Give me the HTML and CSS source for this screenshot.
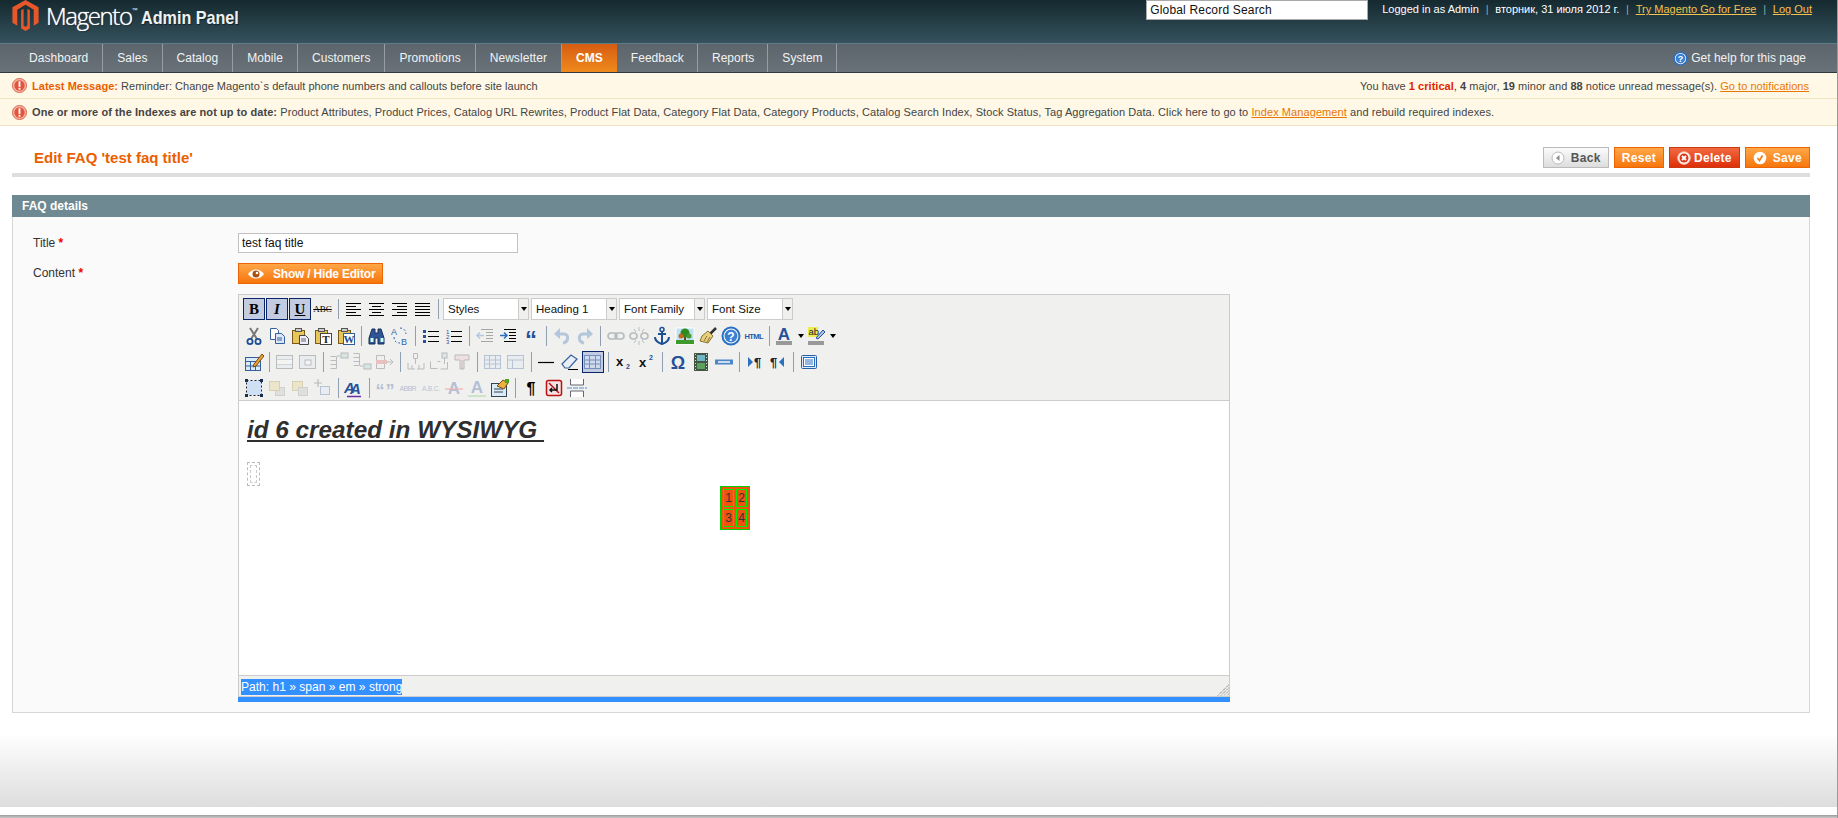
FILE: index.html
```html
<!DOCTYPE html>
<html lang="en">
<head>
<meta charset="utf-8">
<title>Edit FAQ</title>
<link rel="stylesheet" href="styles.css">
</head>
<body>
<svg class="defs" width="0" height="0" aria-hidden="true">
  <symbol id="al" viewBox="0 0 20 20"><path class="ln" d="M2 4.500h15M2 7.500h10M2 10.500h15M2 13.500h10M2 16.500h15"/></symbol>
  <symbol id="ac" viewBox="0 0 20 20"><path class="ln" d="M2 4.500h15M5 7.500h9M2 10.500h15M5 13.500h9M2 16.500h15"/></symbol>
  <symbol id="ar" viewBox="0 0 20 20"><path class="ln" d="M2 4.500h15M7 7.500h10M2 10.500h15M7 13.500h10M2 16.500h15"/></symbol>
  <symbol id="aj" viewBox="0 0 20 20"><path class="ln" d="M2 4.500h15M2 7.500h15M2 10.500h15M2 13.500h15M2 16.500h15"/></symbol>
  <symbol id="cut" viewBox="0 0 20 20"><path d="M6 2l7 11M14 2L7 13" stroke="#777" stroke-width="2" fill="none"/><circle cx="6" cy="15.500" r="2.600" fill="none" stroke="#1d4f93" stroke-width="1.800"/><circle cx="14" cy="15.500" r="2.600" fill="none" stroke="#1d4f93" stroke-width="1.800"/></symbol>
  <symbol id="copy" viewBox="0 0 20 20"><path d="M3.500 2.500h6l2 2v9h-8z" fill="#fff" stroke="#345f9c"/><path d="M8.500 7.500h6l3 3v7h-9z" fill="#dbe7f6" stroke="#345f9c"/><path d="M10 12h5M10 14h5" stroke="#345f9c"/></symbol>
  <symbol id="paste" viewBox="0 0 20 20"><rect x="2.500" y="4.500" width="12" height="13" fill="#e9c65a" stroke="#7a5a18"/><rect x="5.500" y="2.500" width="6" height="3" fill="#ccc" stroke="#555"/><path d="M9.500 9.500h6l3 3v6h-9z" fill="#eef" stroke="#444"/><path d="M11 13h5M11 15h5" stroke="#666"/></symbol>
  <symbol id="pastet" viewBox="0 0 20 20"><rect x="2.500" y="4.500" width="12" height="13" fill="#e9c65a" stroke="#7a5a18"/><rect x="5.500" y="2.500" width="6" height="3" fill="#ccc" stroke="#555"/><rect x="7.500" y="7.500" width="11" height="11" fill="#fff" stroke="#444"/><text class="ser" x="13" y="17" text-anchor="middle" font-size="11" fill="#222">T</text></symbol>
  <symbol id="pastew" viewBox="0 0 20 20"><rect x="2.500" y="4.500" width="12" height="13" fill="#e9c65a" stroke="#7a5a18"/><rect x="5.500" y="2.500" width="6" height="3" fill="#ccc" stroke="#555"/><rect x="7.500" y="7.500" width="11" height="11" fill="#fff" stroke="#345f9c"/><text class="ser" x="13" y="17" text-anchor="middle" font-size="11" fill="#1d4f93">W</text></symbol>
  <symbol id="find" viewBox="0 0 20 20"><path d="M5 3h3v4h3V3h3l3 9v6h-6v-6H8v6H2v-6z" fill="#2d5597" stroke="#1b2f55"/><rect x="3.500" y="12" width="3" height="4" fill="#cfe"/><rect x="13.500" y="12" width="3" height="4" fill="#cfe"/></symbol>
  <symbol id="repl" viewBox="0 0 20 20"><text class="san" x="1" y="9" font-size="9" fill="#2d67b2">A</text><text class="san" x="11" y="19" font-size="9" fill="#2d67b2">B</text><path d="M4 11c0 4 2 6 6 6M10 2c3 0 6 2 6 6" fill="none" stroke="#2d67b2" stroke-dasharray="2 2"/></symbol>
  <symbol id="ul" viewBox="0 0 20 20"><rect x="2" y="4" width="3" height="3" fill="#27509a"/><rect x="2" y="9" width="3" height="3" fill="#27509a"/><rect x="2" y="14" width="3" height="3" fill="#27509a"/><path class="ln" d="M7 5.500h11M7 10.500h11M7 15.500h11"/></symbol>
  <symbol id="ol" viewBox="0 0 20 20"><text class="san" x="2" y="8" font-size="6" fill="#27509a">1</text><text class="san" x="2" y="13" font-size="6" fill="#27509a">2</text><text class="san" x="2" y="18" font-size="6" fill="#27509a">3</text><path class="ln" d="M7 5.500h11M7 10.500h11M7 15.500h11"/></symbol>
  <symbol id="out" viewBox="0 0 20 20"><path class="ln" d="M6 3.500h12M11 6.500h7M11 9.500h7M11 12.500h7M6 15.500h12"/><path d="M9 9.500H2M5 6.500l-3 3 3 3" fill="none" stroke="#2a6fc0" stroke-width="1.500"/></symbol>
  <symbol id="ind" viewBox="0 0 20 20"><path class="ln" d="M6 3.500h12M11 6.500h7M11 9.500h7M11 12.500h7M6 15.500h12"/><path d="M2 9.500h7M6 6.500l3 3-3 3" fill="none" stroke="#2a6fc0" stroke-width="1.500"/></symbol>
  <symbol id="quo" viewBox="0 0 20 20"><text class="sb" x="10" y="22" text-anchor="middle" font-size="24" fill="#27509a">“</text></symbol>
  <symbol id="undo" viewBox="0 0 20 20"><path d="M5 8h7c5 0 5 8-1 9" fill="none" stroke="#2d67b2" stroke-width="3"/><path d="M8 2v11L2 8z" fill="#2d67b2"/></symbol>
  <symbol id="redo" viewBox="0 0 20 20"><path d="M15 8H8c-5 0-5 8 1 9" fill="none" stroke="#2d67b2" stroke-width="3"/><path d="M12 2v11l6-5z" fill="#2d67b2"/></symbol>
  <symbol id="lnk" viewBox="0 0 20 20"><rect x="2" y="7" width="9" height="6" rx="3" fill="none" stroke="#345" stroke-width="1.600"/><rect x="9" y="7" width="9" height="6" rx="3" fill="none" stroke="#345" stroke-width="1.600"/></symbol>
  <symbol id="unl" viewBox="0 0 20 20"><rect x="1" y="7" width="7" height="6" rx="3" fill="none" stroke="#345" stroke-width="1.600"/><rect x="12" y="7" width="7" height="6" rx="3" fill="none" stroke="#345" stroke-width="1.600"/><path d="M10 1v4M10 15v4M5 3l2 3M15 3l-2 3M5 17l2-3M15 17l-2-3" stroke="#345"/></symbol>
  <symbol id="anc" viewBox="0 0 20 20"><circle cx="10" cy="3.500" r="2" fill="none" stroke="#1d4f93" stroke-width="1.500"/><path d="M10 5v13M6 8h8M3 11c0 4 4 6 7 7 3-1 7-3 7-7" fill="none" stroke="#1d4f93" stroke-width="2"/></symbol>
  <symbol id="img" viewBox="0 0 20 20"><rect x="1" y="2" width="18" height="16" fill="#bfe0f5" stroke="#fff"/><rect x="1" y="14" width="18" height="4" fill="#3f9a2d"/><path d="M10 14v-5" stroke="#6b3f12" stroke-width="2"/><circle cx="10" cy="7" r="4.500" fill="#2f8a20"/><circle cx="6" cy="10" r="2.500" fill="#c06a20"/><circle cx="14" cy="10" r="2.500" fill="#4a9a2d"/></symbol>
  <symbol id="cln" viewBox="0 0 20 20"><path d="M12 8l6-6" stroke="#333" stroke-width="2.500"/><path d="M10 5l5 5-5 7-8-2 2-5z" fill="#e7cf7d" stroke="#8a7330"/><path d="M6 15l3-5M9 16l3-5" stroke="#8a7330"/></symbol>
  <symbol id="hlp" viewBox="0 0 20 20"><circle cx="10" cy="10" r="8.500" fill="#fff" stroke="#2a6fc0" stroke-width="2"/><circle cx="10" cy="10" r="6.500" fill="#3b7fd3"/><text class="sb" x="10" y="14.500" text-anchor="middle" font-size="12" fill="#fff">?</text></symbol>
  <symbol id="htm" viewBox="0 0 20 20"><text class="sb" x="10" y="13" text-anchor="middle" font-size="7.500" fill="#1f5aa8" textLength="19">HTML</text></symbol>
  <symbol id="fc" viewBox="0 0 20 20"><text class="sb" x="9" y="14" text-anchor="middle" font-size="17" fill="#27509a">A</text><rect x="1" y="15" width="16" height="4" fill="#999"/></symbol>
  <symbol id="bc" viewBox="0 0 20 20"><rect x="1" y="1" width="10" height="10" fill="#ecec54"/><text class="san" x="1.500" y="9" font-size="9.500" fill="#222">ab</text><path d="M9 12l7-8 2 2-7 7z" fill="#a9c4e6" stroke="#27509a"/><rect x="1" y="15" width="16" height="4" fill="#999"/></symbol>
  <symbol id="edt" viewBox="0 0 20 20"><rect x="1.500" y="5.500" width="15" height="13" fill="#dce9f7" stroke="#345f9c"/><path d="M1.500 9.500h15M6.500 9.500v9M11.500 9.500v9M1.500 14h15" stroke="#345f9c"/><path d="M10 12l8-10 2 2-8 10-3 1z" fill="#e8a22f" stroke="#7c4a12"/></symbol>
  <symbol id="tbr" viewBox="0 0 20 20"><rect x="1.500" y="3.500" width="16" height="13" fill="#dbe7f6" stroke="#445"/><path d="M1.500 8h16M1.500 12h16" stroke="#445"/><rect x="2" y="8" width="15" height="4" fill="#fff"/></symbol>
  <symbol id="tbc" viewBox="0 0 20 20"><rect x="1.500" y="3.500" width="16" height="13" fill="#dbe7f6" stroke="#445"/><rect x="7" y="8" width="6" height="5" fill="#fff" stroke="#445"/></symbol>
  <symbol id="insb" viewBox="0 0 20 20"><path d="M1.500 4.500h6v12h-6M1.500 8.500h6M1.500 12.500h6" fill="none" stroke="#445"/><rect x="12" y="1" width="7" height="5" fill="#9cc" stroke="#445"/><path d="M11 4H8" stroke="#345"/></symbol>
  <symbol id="insa" viewBox="0 0 20 20"><path d="M1.500 1.500h6v12h-6M1.500 5.500h6M1.500 9.500h6" fill="none" stroke="#445"/><rect x="12" y="12" width="7" height="5" fill="#9cc" stroke="#445"/><path d="M11 14H8" stroke="#345"/></symbol>
  <symbol id="delr" viewBox="0 0 20 20"><path d="M1.500 3.500h8M1.500 16.500h8M1.500 3.500v13M9.500 3.500v13" fill="none" stroke="#445"/><rect x="1" y="8" width="11" height="4" fill="#d55"/><path d="M11 10h7M15 7l3 3-3 3" fill="none" stroke="#445"/></symbol>
  <symbol id="cb" viewBox="0 0 20 20"><path d="M7.500 1.500h4v5h-4zM9.500 7v5M2 11l0 6h7M11 17h7v-6M6 13v4M13 13v4" fill="none" stroke="#445"/></symbol>
  <symbol id="cd" viewBox="0 0 20 20"><path d="M1.500 9.500v7h7M8.500 9.500h3M11.500 17h7v-7" fill="none" stroke="#445"/><rect x="13" y="1" width="5" height="5" fill="#bcd" stroke="#445"/><path d="M15.500 6v6" stroke="#445"/></symbol>
  <symbol id="cx" viewBox="0 0 20 20"><path d="M3 3h14v5h-5v9H8V8H3z" fill="#eebbbb" stroke="#445"/><path d="M10 8v9" stroke="#445"/></symbol>
  <symbol id="tbl" viewBox="0 0 20 20"><rect x="1.500" y="3.500" width="16" height="13" fill="#dbe7f6" stroke="#345f9c"/><path d="M1.500 8h16M1.500 12h16M6.500 3.500v13M12.500 3.500v13" stroke="#345f9c"/></symbol>
  <symbol id="tb2" viewBox="0 0 20 20"><rect x="1.500" y="3.500" width="16" height="13" fill="#dbe7f6" stroke="#345f9c"/><path d="M1.500 8h16M6.500 8v8.500" stroke="#345f9c"/></symbol>
  <symbol id="hr" viewBox="0 0 20 20"><path d="M1 10.500h16" stroke="#000" stroke-width="1.200"/></symbol>
  <symbol id="era" viewBox="0 0 20 20"><path d="M2 12L11 3l6 4-8 9H5z" fill="#e8eef6" stroke="#345f9c" stroke-width="1.200"/><path d="M8 17.500h10" stroke="#000"/></symbol>
  <symbol id="sub" viewBox="0 0 20 20"><text class="sb" x="2" y="14" font-size="13" fill="#111">x</text><text class="sb" x="12" y="17" font-size="7" fill="#27509a">2</text></symbol>
  <symbol id="sup" viewBox="0 0 20 20"><text class="sb" x="2" y="15" font-size="13" fill="#111">x</text><text class="sb" x="12" y="8" font-size="7" fill="#27509a">2</text></symbol>
  <symbol id="om" viewBox="0 0 20 20"><text class="sb" x="10" y="17" text-anchor="middle" font-size="18" fill="#27509a">Ω</text></symbol>
  <symbol id="med" viewBox="0 0 20 20"><rect x="3" y="1" width="14" height="18" fill="#454"/><rect x="6" y="3" width="8" height="6" fill="#6db6c8"/><rect x="6" y="11" width="8" height="6" fill="#5da25a"/><path d="M4.500 2v16M15.500 2v16" stroke="#cdd" stroke-dasharray="1 2"/></symbol>
  <symbol id="nbs" viewBox="0 0 20 20"><rect x="1" y="7.500" width="18" height="5" fill="#4d86c9"/><rect x="4" y="9" width="12" height="2" fill="#cde"/></symbol>
  <symbol id="ltr" viewBox="0 0 20 20"><path d="M3 5l5 5-5 5z" fill="#2a6fc0"/><text class="sb" x="9" y="15" font-size="13" fill="#223">¶</text></symbol>
  <symbol id="rtl" viewBox="0 0 20 20"><text class="sb" x="2" y="15" font-size="13" fill="#223">¶</text><path d="M16 5l-5 5 5 5z" fill="#2a6fc0"/></symbol>
  <symbol id="ful" viewBox="0 0 20 20"><rect x="2.500" y="3.500" width="15" height="13" rx="1" fill="#dce9f7" stroke="#2a5fa5"/><rect x="4.500" y="5.500" width="11" height="9" fill="#fff" stroke="#2a6fc0"/><path d="M6 8h8M6 10h8M6 12h8" stroke="#2a6fc0"/></symbol>
  <symbol id="sela" viewBox="0 0 20 20"><rect x="3" y="3" width="14" height="14" fill="#cfe0f5"/><path d="M2.500 2.500h15v15h-15z" fill="none" stroke="#223" stroke-dasharray="2 2"/><path d="M1 1h3v3H1zM16 1h3v3h-3zM1 16h3v3H1zM16 16h3v3h-3z" fill="#1b2f55"/></symbol>
  <symbol id="lf" viewBox="0 0 20 20"><rect x="8.500" y="9.500" width="9" height="8" fill="#bbb" stroke="#888"/><rect x="2.500" y="3.500" width="10" height="9" fill="#e8cf7a" stroke="#a48a36"/></symbol>
  <symbol id="lb" viewBox="0 0 20 20"><rect x="2.500" y="3.500" width="10" height="9" fill="#e8cf7a" stroke="#a48a36"/><rect x="8.500" y="9.500" width="9" height="8" fill="#bbb" stroke="#888"/></symbol>
  <symbol id="la" viewBox="0 0 20 20"><rect x="7.500" y="8.500" width="9" height="8" fill="#dbe7f6" stroke="#345f9c"/><path d="M5 1v8M1 5h8" stroke="#445" stroke-width="1.200"/></symbol>
  <symbol id="sty" viewBox="0 0 20 20"><text class="sbi" x="0" y="15" font-size="15" fill="#27509a">A</text><text class="sbi" x="6" y="16" font-size="15" fill="#27509a">A</text><path d="M3 18.500h14" stroke="#6b2fa5" stroke-width="1.500"/></symbol>
  <symbol id="cit" viewBox="0 0 20 20"><text class="sb" x="10" y="19" text-anchor="middle" font-size="18" fill="#27509a" textLength="19">“”</text></symbol>
  <symbol id="abb" viewBox="0 0 20 20"><text class="san" x="10" y="13" text-anchor="middle" font-size="7" fill="#27509a" textLength="17">ABBR</text></symbol>
  <symbol id="acr" viewBox="0 0 20 20"><text class="san" x="10" y="13" text-anchor="middle" font-size="6.500" fill="#27509a" textLength="18">A.B.C.</text></symbol>
  <symbol id="del" viewBox="0 0 20 20"><text class="sb" x="10" y="16" text-anchor="middle" font-size="17" fill="#27509a">A</text><path d="M1 11h18" stroke="#e22" stroke-width="1.200"/></symbol>
  <symbol id="ins" viewBox="0 0 20 20"><text class="sb" x="10" y="15" text-anchor="middle" font-size="17" fill="#27509a">A</text><path d="M1 18h18" stroke="#3a3" stroke-width="1.200"/></symbol>
  <symbol id="att" viewBox="0 0 20 20"><rect x="1.500" y="5.500" width="15" height="13" fill="#dce9f7" stroke="#345"/><path d="M4 11h9M4 14h9" stroke="#345"/><path d="M7 8l6-6 5 3-4 6z" fill="#e8b23f" stroke="#7c4a12"/><rect x="15" y="1" width="4" height="4" fill="#4a2"/></symbol>
  <symbol id="pil" viewBox="0 0 20 20"><text class="sb" x="10" y="16" text-anchor="middle" font-size="16" fill="#000">¶</text></symbol>
  <symbol id="vch" viewBox="0 0 20 20"><rect x="2.500" y="2.500" width="15" height="15" rx="2" fill="#f7e3e3" stroke="#b11" stroke-width="1.500"/><path d="M5 5l10 10" stroke="#b11" stroke-width="1.500"/><path d="M13 6v6H6M8 10l-2 2 2 2" fill="none" stroke="#111" stroke-width="1.500"/></symbol>
  <symbol id="pgb" viewBox="0 0 20 20"><path d="M3.500 1v6h13V1M3.500 19v-6h13v6" fill="#fff" stroke="#667"/><path d="M0 10h20" stroke="#5b8fd0" stroke-dasharray="5 1"/></symbol>
</svg>

<div class="page">
<header class="head">
  <div class="logo">
    <svg class="mark" viewBox="0 0 27 32"><path fill="#e8572a" d="M13.500 0L27 7.500v16L22 26.500V10L13.500 5 5 10v16.500L0 23.500v-16z"/><path fill="#e8572a" d="M13.500 32L9 29.300V10.500l2.500-1.500v17.500l2 1.200 2-1.200V9l2.500 1.500v18.800z"/></svg>
    <span class="brand">Magento</span><span class="tm">™</span><span class="panel">Admin Panel</span>
  </div>
  <div class="top-right">
    <input class="global" type="text" value="Global Record Search">
    <div class="userline">Logged in as Admin<i>|</i>вторник, 31 июля 2012 г.<i>|</i><a href="#">Try Magento Go for Free</a><i>|</i><a href="#">Log Out</a></div>
  </div>
</header>
<nav class="nav">
  <ul class="tabs">
    <li>Dashboard</li><li>Sales</li><li>Catalog</li><li>Mobile</li><li>Customers</li><li>Promotions</li><li>Newsletter</li><li class="on">CMS</li><li>Feedback</li><li>Reports</li><li>System</li>
  </ul>
  <a class="help" href="#"><svg class="help-i" viewBox="0 0 20 20"><use href="#hlp"/></svg>Get help for this page</a>
</nav>
<div class="notice">
  <svg class="warn" viewBox="0 0 16 16"><circle cx="8" cy="8" r="7.500" fill="#f6b7a8" stroke="#d9604a"/><circle cx="8" cy="8" r="5.500" fill="#e2553c"/><rect x="7" y="3.500" width="2" height="6" fill="#fff"/><rect x="7" y="10.500" width="2" height="2" fill="#fff"/></svg>
  <p class="ntext"><b class="latest">Latest Message:</b> Reminder: Change Magento`s default phone numbers and callouts before site launch</p>
  <p class="nright">You have <b class="crit">1 critical</b>, <b>4</b> major, <b>19</b> minor and <b>88</b> notice unread message(s). <a href="#">Go to notifications</a></p>
</div>
<div class="notice">
  <svg class="warn" viewBox="0 0 16 16"><circle cx="8" cy="8" r="7.500" fill="#f6b7a8" stroke="#d9604a"/><circle cx="8" cy="8" r="5.500" fill="#e2553c"/><rect x="7" y="3.500" width="2" height="6" fill="#fff"/><rect x="7" y="10.500" width="2" height="2" fill="#fff"/></svg>
  <p class="ntext"><b>One or more of the Indexes are not up to date:</b> Product Attributes, Product Prices, Catalog URL Rewrites, Product Flat Data, Category Flat Data, Category Products, Catalog Search Index, Stock Status, Tag Aggregation Data. Click here to go to <a href="#">Index Management</a> and rebuild required indexes.</p>
</div>

<main class="main">
  <div class="titlebar">
    <h3 class="title">Edit FAQ 'test faq title'</h3>
    <div class="actions">
      <button class="btn back"><svg class="bi" viewBox="0 0 14 14"><circle cx="7" cy="7" r="6" fill="#fff" stroke="#bbb"/><path d="M8.500 4v6L5 7z" fill="#888"/></svg>Back</button>
      <button class="btn">Reset</button>
      <button class="btn del"><svg class="bi" viewBox="0 0 14 14"><circle cx="7" cy="7" r="6.300" fill="#fff" stroke="#f7b7a0"/><circle cx="7" cy="7" r="4.500" fill="#d8391b"/><path d="M5 5l4 4M9 5l-4 4" stroke="#fff" stroke-width="1.800"/></svg>Delete</button>
      <button class="btn"><svg class="bi" viewBox="0 0 14 14"><circle cx="7" cy="7" r="6.300" fill="#fff"/><path d="M4.500 7l2 2.500 3-5" fill="none" stroke="#f0801a" stroke-width="1.800"/></svg>Save</button>
    </div>
  </div>

  <section class="box">
    <h4 class="box-head">FAQ details</h4>
    <div class="box-body">
      <div class="row">
        <label class="lbl">Title <em>*</em></label>
        <input class="field" type="text" value="test faq title">
      </div>
      <div class="row">
        <label class="lbl">Content <em>*</em></label>
        <button class="btn showhide"><svg class="eye" viewBox="0 0 18 12"><path d="M1 6c4-6 12-6 16 0-4 6-12 6-16 0z" fill="#fff"/><circle cx="9" cy="6" r="3.500" fill="#a8500f"/><circle cx="10" cy="5" r="1.300" fill="#fff"/></svg>Show / Hide Editor</button>
      </div>
      <div class="row">
        <div class="lbl"></div>
        <div class="editor">
          <div class="ed-frame">
            <div class="toolbar">
              <div class="tr">
                <span class="b act tb">B</span><span class="b act ti">I</span><span class="b act tu">U</span><span class="b"><span class="abc">ABC</span></span>
                <span class="s"></span>
                <span class="b"><svg class="ic"><use href="#al"/></svg></span><span class="b"><svg class="ic"><use href="#ac"/></svg></span><span class="b"><svg class="ic"><use href="#ar"/></svg></span><span class="b"><svg class="ic"><use href="#aj"/></svg></span>
                <span class="s"></span>
                <span class="sel"><span class="sel-t">Styles</span><span class="sel-a"></span></span>
                <span class="sel"><span class="sel-t">Heading 1</span><span class="sel-a"></span></span>
                <span class="sel"><span class="sel-t">Font Family</span><span class="sel-a"></span></span>
                <span class="sel"><span class="sel-t">Font Size</span><span class="sel-a"></span></span>
              </div>
              <div class="tr">
                <span class="b"><svg class="ic"><use href="#cut"/></svg></span><span class="b"><svg class="ic"><use href="#copy"/></svg></span><span class="b"><svg class="ic"><use href="#paste"/></svg></span><span class="b"><svg class="ic"><use href="#pastet"/></svg></span><span class="b"><svg class="ic"><use href="#pastew"/></svg></span>
                <span class="s"></span>
                <span class="b"><svg class="ic"><use href="#find"/></svg></span><span class="b"><svg class="ic"><use href="#repl"/></svg></span>
                <span class="s"></span>
                <span class="b"><svg class="ic"><use href="#ul"/></svg></span><span class="b"><svg class="ic"><use href="#ol"/></svg></span>
                <span class="s"></span>
                <span class="b off"><svg class="ic"><use href="#out"/></svg></span><span class="b"><svg class="ic"><use href="#ind"/></svg></span><span class="b"><svg class="ic"><use href="#quo"/></svg></span>
                <span class="s"></span>
                <span class="b off"><svg class="ic"><use href="#undo"/></svg></span><span class="b off"><svg class="ic"><use href="#redo"/></svg></span>
                <span class="s"></span>
                <span class="b off"><svg class="ic"><use href="#lnk"/></svg></span><span class="b off"><svg class="ic"><use href="#unl"/></svg></span><span class="b"><svg class="ic"><use href="#anc"/></svg></span><span class="b"><svg class="ic"><use href="#img"/></svg></span><span class="b"><svg class="ic"><use href="#cln"/></svg></span><span class="b"><svg class="ic"><use href="#hlp"/></svg></span><span class="b"><svg class="ic"><use href="#htm"/></svg></span>
                <span class="s"></span>
                <span class="b"><svg class="ic"><use href="#fc"/></svg></span><span class="drop"></span><span class="b"><svg class="ic"><use href="#bc"/></svg></span><span class="drop"></span>
              </div>
              <div class="tr">
                <span class="b"><svg class="ic"><use href="#edt"/></svg></span>
                <span class="s"></span>
                <span class="b off"><svg class="ic"><use href="#tbr"/></svg></span><span class="b off"><svg class="ic"><use href="#tbc"/></svg></span>
                <span class="s"></span>
                <span class="b off"><svg class="ic"><use href="#insb"/></svg></span><span class="b off"><svg class="ic"><use href="#insa"/></svg></span><span class="b off"><svg class="ic"><use href="#delr"/></svg></span>
                <span class="s"></span>
                <span class="b off"><svg class="ic"><use href="#cb"/></svg></span><span class="b off"><svg class="ic"><use href="#cd"/></svg></span><span class="b off"><svg class="ic"><use href="#cx"/></svg></span>
                <span class="s"></span>
                <span class="b off"><svg class="ic"><use href="#tbl"/></svg></span><span class="b off"><svg class="ic"><use href="#tb2"/></svg></span>
                <span class="s"></span>
                <span class="b"><svg class="ic"><use href="#hr"/></svg></span><span class="b"><svg class="ic"><use href="#era"/></svg></span><span class="b act vis"><svg class="ic faint"><use href="#tbl"/></svg></span>
                <span class="s"></span>
                <span class="b"><svg class="ic"><use href="#sub"/></svg></span><span class="b"><svg class="ic"><use href="#sup"/></svg></span>
                <span class="s"></span>
                <span class="b"><svg class="ic"><use href="#om"/></svg></span><span class="b"><svg class="ic"><use href="#med"/></svg></span><span class="b"><svg class="ic"><use href="#nbs"/></svg></span>
                <span class="s"></span>
                <span class="b"><svg class="ic"><use href="#ltr"/></svg></span><span class="b"><svg class="ic"><use href="#rtl"/></svg></span>
                <span class="s"></span>
                <span class="b"><svg class="ic"><use href="#ful"/></svg></span>
              </div>
              <div class="tr">
                <span class="b"><svg class="ic"><use href="#sela"/></svg></span><span class="b off"><svg class="ic"><use href="#lf"/></svg></span><span class="b off"><svg class="ic"><use href="#lb"/></svg></span><span class="b off"><svg class="ic"><use href="#la"/></svg></span>
                <span class="s"></span>
                <span class="b"><svg class="ic"><use href="#sty"/></svg></span>
                <span class="s"></span>
                <span class="b off"><svg class="ic"><use href="#cit"/></svg></span><span class="b off"><svg class="ic"><use href="#abb"/></svg></span><span class="b off"><svg class="ic"><use href="#acr"/></svg></span><span class="b off"><svg class="ic"><use href="#del"/></svg></span><span class="b off"><svg class="ic"><use href="#ins"/></svg></span><span class="b"><svg class="ic"><use href="#att"/></svg></span>
                <span class="s"></span>
                <span class="b"><svg class="ic"><use href="#pil"/></svg></span><span class="b"><svg class="ic"><use href="#vch"/></svg></span><span class="b"><svg class="ic"><use href="#pgb"/></svg></span>
              </div>
            </div>
            <div class="area">
              <h1 class="hd"><span><em><strong>id 6 created in WYSIWYG&nbsp;</strong></em></span></h1>
              <div class="ph"><div class="ph-in"></div></div>
              <table class="tbl4">
                <tr><td>1</td><td>2</td></tr>
                <tr><td>3</td><td>4</td></tr>
              </table>
            </div>
            <div class="status">
              <span class="path">Path: h1 » span » em » strong</span>
              <svg class="grip" viewBox="0 0 12 12"><path d="M11.500 1L1 11.500M11.500 4L4 11.500M11.500 7L7 11.500M11.500 10L10 11.500" stroke="#555" stroke-dasharray="1 1" fill="none"/></svg>
            </div>
          </div>
          <div class="bluebar"></div>
        </div>
      </div>
    </div>
  </section>
</main>
<footer class="foot">
  <div class="foot-grad"></div>
  <div class="foot-line"></div>
</footer>
</div>
</body>
</html>
```
FILE: styles.css
```css
* { box-sizing: border-box; }
html, body { margin: 0; padding: 0; height: 818px; overflow: hidden; background: #fff; }
body { font: 11px "Liberation Sans", Arial, sans-serif; color: #444; }
a { color: #ea7601; }
p, h1, h3, h4, ul { margin: 0; padding: 0; }
.defs { position: absolute; }
.ln { stroke: #000; stroke-width: 1; fill: none; }
.ser { font-family: "Liberation Serif", serif; font-weight: 700; }
.san { font-family: "Liberation Sans", sans-serif; }
.sb { font-family: "Liberation Sans", sans-serif; font-weight: 700; }
.sbi { font-family: "Liberation Sans", sans-serif; font-weight: 700; font-style: italic; }

.page { height: 818px; display: flex; flex-direction: column; border-right: 1px solid #9a9a9a; }

.head { height: 44px; flex: none; display: flex; justify-content: space-between; padding: 0 25px 0 12px; background: linear-gradient(#15292f, #35525d); border-bottom: 1px solid #607c87; }
.logo { display: flex; align-items: flex-start; color: #fff; }
.mark { width: 27px; height: 31px; flex: none; margin-right: 7px; }
.brand { font: 300 24px/31px "Open Sans", sans-serif; letter-spacing: -1.4px; text-shadow: 0 0 1px #fff, 1px 1px 1px #12242a; }
.tm { font-size: 6px; line-height: 20px; margin-right: 3px; }
.panel { width: 97px; font: 700 19px/35px "Liberation Sans", sans-serif; white-space: nowrap; transform: scaleX(.85); transform-origin: 0 50%; text-shadow: 1px 1px 1px #12242a; color: #eef2f2; }
.top-right { display: flex; align-items: flex-start; }
.global { width: 222px; height: 20px; padding: 0 3px; border: 1px solid #aaa; background: #fff; font: 12px "Liberation Sans", sans-serif; letter-spacing: .18px; color: #111; margin-right: 14px; }
.userline { color: #fff; line-height: 18px; }
.userline i { font-style: normal; margin: 0 6.800px; color: #8aa; }
.userline a { color: #f4c04e; }

.nav { height: 29px; flex: none; display: flex; justify-content: space-between; padding-left: 15px; padding-right: 31px; background: linear-gradient(#5d656c, #6a7279); border-bottom: 1px solid #2e393e; font-size: 12px; color: #fff; }
.tabs { display: flex; list-style: none; }
.tabs li { padding: 0 14px; line-height: 28px; border-right: 1px solid #979da2; color: #f1f3f3; letter-spacing: .055px; }
.tabs li:nth-child(n+9) { padding: 0 13px 0 14px; }
.tabs li.on { background: linear-gradient(#d65c12, #ef8a1c); font-weight: 700; border-right: 0; color: #fff; padding: 0 14px; }
.help { display: flex; align-items: center; color: #f0f2f2; text-decoration: none; height: 28px; }
.help-i { width: 15px; height: 15px; margin-right: 3px; }

.notice { height: 26px; flex: none; display: flex; align-items: center; padding: 0 28px 0 12px; background: #fff8e6; border-bottom: 1px solid #efe3c3; color: #444; letter-spacing: .025px; }
.notice + .notice { height: 27px; letter-spacing: .08px; }
.warn { width: 15px; height: 15px; flex: none; margin-right: 5px; }
.ntext { flex: 1; }
.ntext b { color: #444; }
.ntext b.latest { color: #eb5e00; }
.nright { letter-spacing: .04px; }
.nright b { color: #444; }
.nright b.crit { color: #df1f00; }

.main { padding: 0 27px 0 12px; flex: none; }
.titlebar { height: 51px; display: flex; justify-content: space-between; align-items: flex-end; padding: 0 0 5px 22px; border-bottom: 4px solid #dedede; margin-bottom: 18px; }
.title { font: 700 15px/20px "Liberation Sans", sans-serif; color: #eb5e00; }
.actions { display: flex; gap: 5px; }
.btn { height: 21px; padding: 0 7px; display: inline-flex; align-items: center; gap: 6px; border: 1px solid #ed6502; background: linear-gradient(#ffa748, #f6760c); color: #fff; font: 700 12px "Liberation Sans", sans-serif; letter-spacing: .3px; white-space: nowrap; }
.btn.back { background: linear-gradient(#fbfbfb, #ddd); border-color: #bbb; color: #555; padding: 0 7px; }
.btn.del { background: linear-gradient(#f2693f, #dd2f0b); border-color: #c93a0f; gap: 3px; padding: 0 7px; }
.bi { width: 14px; height: 14px; flex: none; }

.box-head { height: 22px; padding-left: 10px; background: #6f8992; color: #fff; font: 700 12px/22px "Liberation Sans", sans-serif; }
.box-body { height: 496px; padding: 16px 0 0 20px; background: #fafafa; border: 1px solid #d6d6d6; border-top: 0; }
.row { display: flex; margin-bottom: 10px; }
.lbl { width: 205px; flex: none; font-size: 12px; line-height: 20px; color: #333; }
.lbl em { color: #e00; font-style: normal; font-weight: 700; }
.field { width: 280px; height: 20px; padding: 0 3px; border: 1px solid #c2c2c2; background: #fff; font: 12px "Liberation Sans", sans-serif; color: #111; }
.btn.showhide { width: 145px; padding: 0 8px; gap: 8px; letter-spacing: -.2px; }
.eye { width: 18px; height: 12px; flex: none; }

.editor { width: 992px; flex: none; }
.ed-frame { border: 1px solid #ccc; }
.toolbar { height: 106px; padding: 1px 0 0 4px; background: #f0f0ee; border-bottom: 1px solid #ccc; }
.tr { height: 26px; display: flex; align-items: center; }
.tr + .tr { margin-left: -1px; }
.tr:nth-child(2) { margin-top: 1px; }
.tr:nth-child(4) { height: 25px; }
.b { width: 23px; height: 22px; flex: none; display: flex; align-items: center; justify-content: center; }
.ic { width: 20px; height: 20px; }
.off .ic { opacity: .3; }
.faint { opacity: .55; }
.act { width: 22px; border: 1px solid #0a246a; background: #c2cbe0; color: #000; font: 700 15px "Liberation Serif", serif; }
.act + .act { margin-left: 1px; }
.ti { font-style: italic; }
.tu { text-decoration: underline; }
.vis { margin-left: 1px; }
.abc { font: 9px "Liberation Serif", serif; color: #000; text-decoration: line-through; }
.s { width: 8px; height: 22px; flex: none; display: flex; justify-content: center; }
.s::before { content: ""; width: 1px; height: 20px; margin-top: 1px; background: #8f9fb0; }
.sel { width: 86px; height: 22px; flex: none; display: flex; margin: 0 1px; border: 1px solid #ccc; background: #f0f0ee; }
.sel-t { flex: 1; background: #fff; padding-left: 4px; font: 11.500px/20px "Liberation Sans", sans-serif; color: #111; border-right: 1px solid #ccc; }
.sel-a { width: 9px; display: flex; align-items: center; justify-content: center; }
.sel-a::after, .drop::after { content: ""; border: 3px solid transparent; border-top: 4px solid #000; border-bottom: 0; }
.drop { width: 9px; height: 22px; flex: none; display: flex; align-items: center; justify-content: center; }

.area { height: 275px; padding: 11px 6px 0 8px; background: #fff; border-bottom: 1px solid #ccc; }
.hd { height: 36px; font: italic 700 24.300px/36px "Liberation Sans", sans-serif; color: #2f2f2f; text-decoration: underline; }
.ph { width: 13px; height: 24px; margin-top: 14px; border: 1px dashed #bbb; padding: 2px; }
.ph-in { width: 100%; height: 100%; border: 1px dashed #ccc; }
.tbl4 { margin: 0 auto; border-collapse: separate; border-spacing: 2px; border: 1px solid #0c0; background: #f0520f; }
.tbl4 td { width: 11px; height: 18px; padding: 0; border: 1px solid #0e0; background: #f0520f; color: #333; font: 12px/16px "Liberation Sans", sans-serif; text-align: center; }

.status { height: 20px; display: flex; justify-content: space-between; padding: 3px 0 0 2px; background: #f0f0ee; }
.path { height: 16px; font: 12.060px/16px "Liberation Sans", sans-serif; background: #3390ff; color: #fff; }
.grip { width: 12px; height: 12px; align-self: flex-end; }
.bluebar { height: 5px; background: #3390ff; }

.foot { flex: 1; display: flex; flex-direction: column; padding-top: 20px; background: #fff; }
.foot-grad { height: 74px; flex: none; background: linear-gradient(#fff, #ddd); }
.foot-line { height: 3px; margin-top: 8px; flex: none; background: linear-gradient(#999, #ccc); }
```
